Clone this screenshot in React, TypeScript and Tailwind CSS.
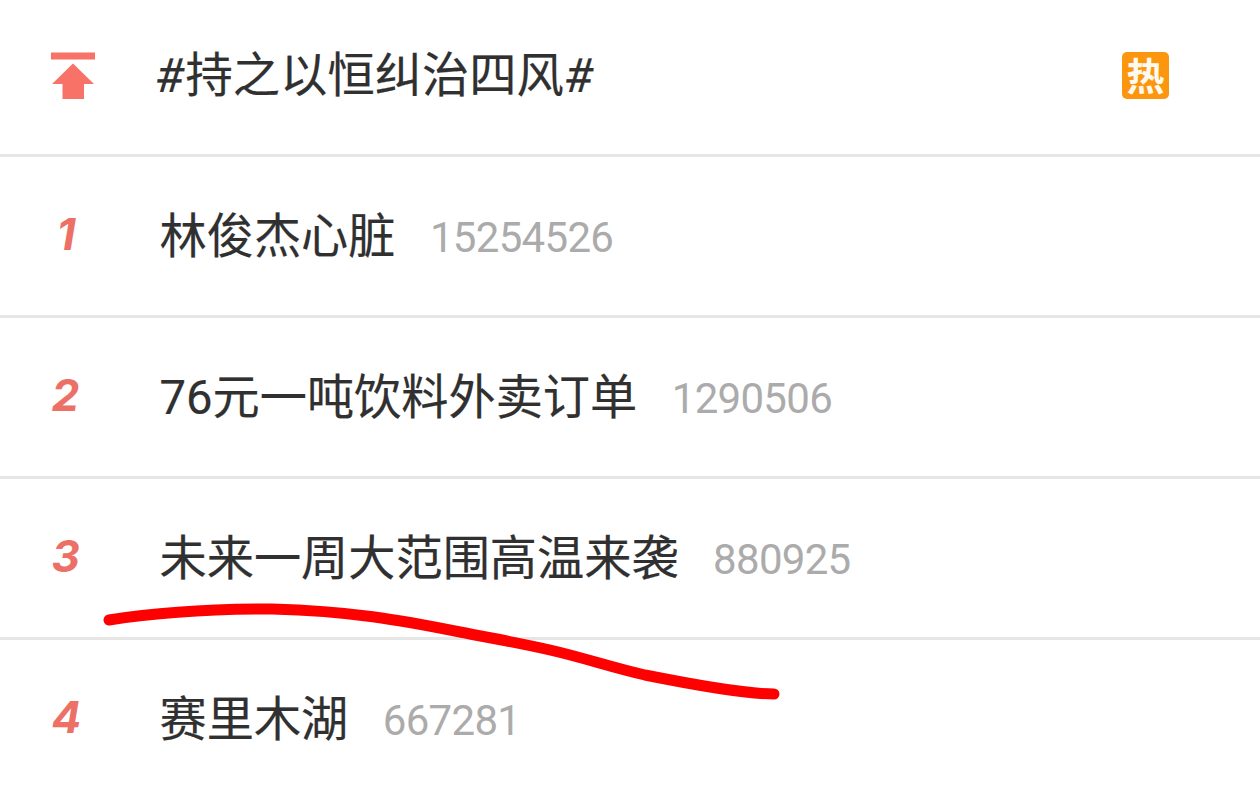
const rows = [
  { rank: "1", title: "林俊杰心脏", heat: "15254526" },
  { rank: "2", title: "76元一吨饮料外卖订单", heat: "1290506" },
  { rank: "3", title: "未来一周大范围高温来袭", heat: "880925" },
  { rank: "4", title: "赛里木湖", heat: "667281" },
];

export default function App() {
  return (
    <main className="relative h-[788px] w-[1260px] overflow-hidden bg-white font-[Roboto,'Noto_Sans_CJK_SC',sans-serif] text-[#303030]">
      <div className="flex h-[157px] items-center border-b-3 border-[#e6e6e6] pr-[91px] pb-[3px] pl-[51px]">
        <svg className="h-12 w-11 shrink-0" viewBox="0 0 44 48" fill="#f87268">
          <path d="M0 0.5H44V7.5H0ZM22 11.5L43 32H33V47H11.5V32H1Z" />
        </svg>
        <h1 className="mt-[3px] ml-[60px] text-[47.3px] leading-none whitespace-nowrap [-webkit-text-stroke:0.2px_#303030]">
          <span className="inline-block w-[30.5px] -skew-x-6">#</span>持之以恒纠治四风<span className="inline-block -skew-x-6">#</span>
        </h1>
        <span className="ml-auto flex size-[47px] items-center justify-center rounded-[5px] bg-[#fc960e] pb-[4px] font-['Noto_Sans_CJK_SC',sans-serif] text-[38px] leading-none font-bold text-[#fffaf0]">热</span>
      </div>
      {rows.map((row) => (
        <div key={row.rank} className="flex h-[161px] items-center border-b-3 border-[#e6e6e6] pb-[3px] pl-[51.5px]">
          <span className={`w-[108px] shrink-0 pb-[1px] font-[Inter,sans-serif] text-[44px] leading-none font-bold text-[#ed7067] italic ${row.rank === "1" ? "pl-[5px]" : ""}`}>{row.rank}</span>
          <span className="pt-[6px] text-[47.2px] leading-none whitespace-nowrap [-webkit-text-stroke:0.2px_#303030]">{row.title}</span>
          <span className="ml-[34.5px] pt-[6px] text-[42px] leading-none tracking-[-0.7px] text-[#acabac]">{row.heat}</span>
        </div>
      ))}
      <svg className="absolute inset-0 h-full w-full" viewBox="0 0 1260 788" fill="none">
        <path d="M109 620C160 612 215 609 272 609C350 611 400 620 460 632C490 638 520 643 550 650C585 658 610 667 645 675C680 682 740 694 774 694" stroke="#ff0000" strokeWidth="11" strokeLinecap="round" />
      </svg>
    </main>
  );
}
